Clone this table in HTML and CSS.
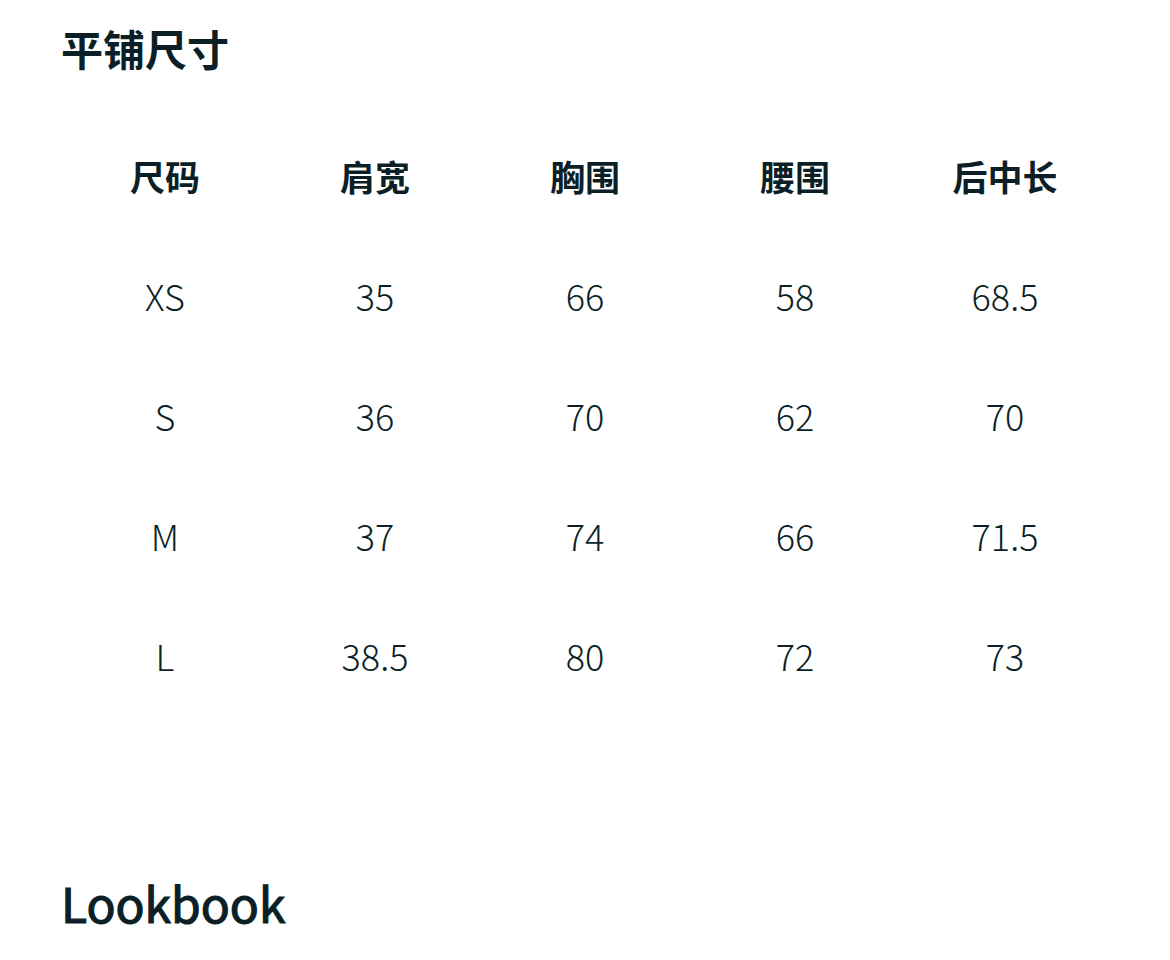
FILE: index.html
```html
<!DOCTYPE html>
<html lang="zh-CN">
<head>
<meta charset="utf-8">
<link rel="stylesheet" href="styles.css">
</head>
<body>
<main class="page">
  <h2 class="title">平铺尺寸</h2>
  <div class="size-table">
    <div class="cell head">尺码</div>
    <div class="cell head">肩宽</div>
    <div class="cell head">胸围</div>
    <div class="cell head">腰围</div>
    <div class="cell head">后中长</div>

    <div class="cell">XS</div>
    <div class="cell">35</div>
    <div class="cell">66</div>
    <div class="cell">58</div>
    <div class="cell">68.5</div>

    <div class="cell">S</div>
    <div class="cell">36</div>
    <div class="cell">70</div>
    <div class="cell">62</div>
    <div class="cell">70</div>

    <div class="cell">M</div>
    <div class="cell">37</div>
    <div class="cell">74</div>
    <div class="cell">66</div>
    <div class="cell">71.5</div>

    <div class="cell">L</div>
    <div class="cell">38.5</div>
    <div class="cell">80</div>
    <div class="cell">72</div>
    <div class="cell">73</div>
  </div>
  <h2 class="lookbook">Lookbook</h2>
</main>
</body>
</html>
```
FILE: styles.css
```css
html, body {
  margin: 0;
  padding: 0;
  background: #ffffff;
}
body {
  font-family: "Noto Sans CJK SC", "Noto Sans", sans-serif;
  color: #0c1f27;
}
.page {
  padding: 0 60px;
}
.title {
  margin: 0;
  height: 115px;
  padding-top: 21px;
  box-sizing: border-box;
  font-size: 42px;
  line-height: 54px;
  font-weight: 700;
  padding-left: 1px;
}
.size-table {
  display: grid;
  grid-template-columns: repeat(5, 1fr);
  grid-auto-rows: 120px;
}
.cell {
  display: flex;
  align-items: center;
  justify-content: center;
  font-size: 36px;
  font-weight: 300;
}
.cell.head {
  font-weight: 700;
  font-size: 35px;
}
.lookbook {
  margin: 0;
  margin-top: 154px;
  font-size: 48px;
  line-height: 66px;
  font-weight: 400;
  -webkit-text-stroke: 1.2px currentColor;
  padding-left: 1px;
}
```
